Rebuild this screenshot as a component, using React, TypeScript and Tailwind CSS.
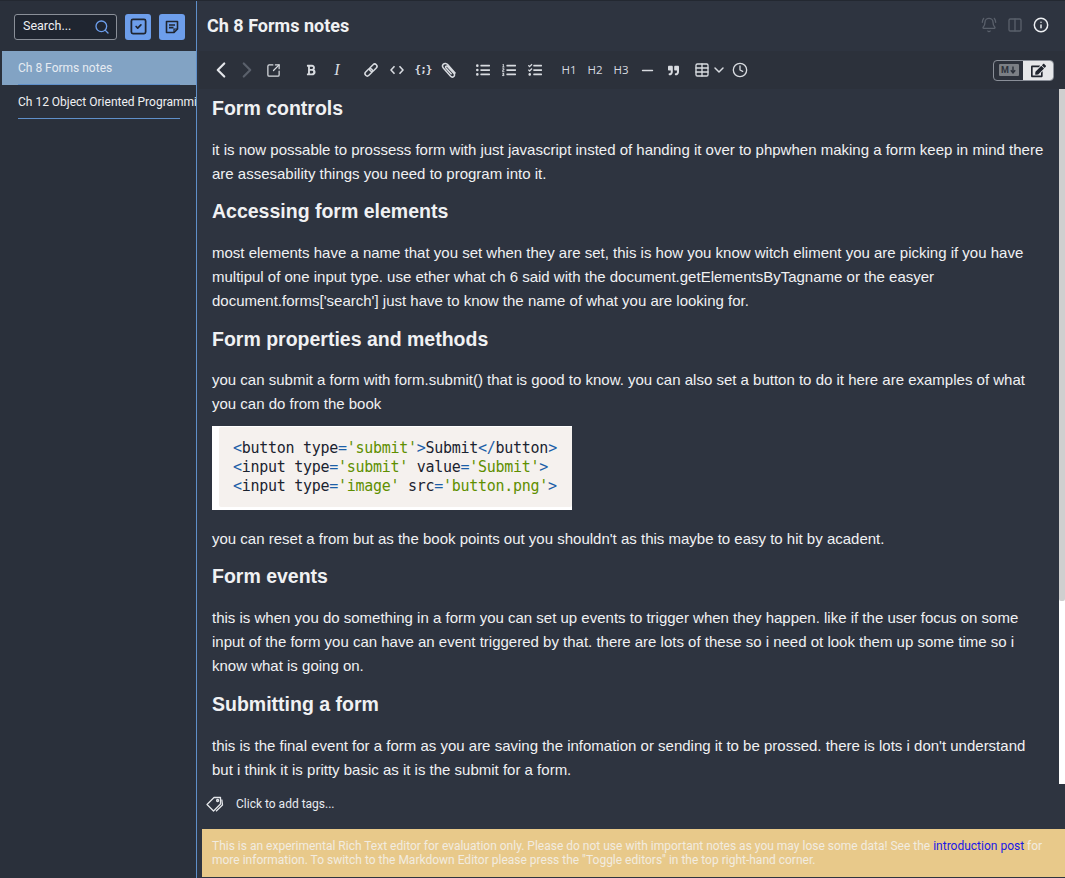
import React from 'react';
import { Search, SquareCheck, ChevronLeft, ChevronRight, SquareArrowOutUpRight, Minus, Table, ChevronDown, Clock, BellRing, Columns2, Info } from 'lucide-react';
import { FaEdit, FaBold, FaListUl, FaListOl, FaQuoteRight, FaTasks } from 'react-icons/fa';

const Heading = ({ children, className = '' }: { children: React.ReactNode; className?: string }) => (
  <h2 className={`text-[19.5px] leading-[24px] font-bold text-[#f0f1f3] ${className}`}>{children}</h2>
);

const Para = ({ children, className = '' }: { children: React.ReactNode; className?: string }) => (
  <p className={`text-[15px] leading-[24px] text-[#f0f1f3] ${className}`}>{children}</p>
);

const Str = ({ children }: { children: React.ReactNode }) => <span className="text-[#5f8f00]">{children}</span>;
const Tok = ({ children }: { children: React.ReactNode }) => <span className="text-[#1d5fa8]">{children}</span>;

const Toolbtn = ({ children, className = '' }: { children: React.ReactNode; className?: string }) => (
  <span className={`flex items-center justify-center shrink-0 text-[#d8dbe0] [&>svg]:shrink-0 ${className}`}>{children}</span>
);

// the toolbar's own glyphs, lucide has no close match for these
const NoteIcon = () => (
  <svg width="16" height="16" viewBox="0 0 16 16" fill="none" stroke="#1f2530" strokeWidth="1.6">
    <path d="M2.5 2.5h11v7.5l-3.5 3.5h-7.5z" strokeLinejoin="round" />
    <path d="M5 6h6M5 8.6h4.5" />
    <path d="M13.5 10h-3.5v3.5" strokeWidth="1.2" />
  </svg>
);

const LinkIcon = () => (
  <svg width="16" height="16" viewBox="0 0 16 16" fill="none" stroke="currentColor" strokeWidth="1.5">
    <g transform="rotate(-45 8 8)">
      <rect x="0.5" y="5.7" width="8.5" height="4.6" rx="2.3" />
      <rect x="7" y="5.7" width="8.5" height="4.6" rx="2.3" />
    </g>
  </svg>
);

const AngleIcon = () => (
  <svg width="14" height="10" viewBox="0 0 14 10" fill="none" stroke="currentColor" strokeWidth="1.6">
    <path d="M4.5 1.2L1 5l3.5 3.8M9.5 1.2L13 5l-3.5 3.8" />
  </svg>
);

const ClipIcon = () => (
  <svg width="18" height="18" viewBox="0 0 18 18" fill="none" stroke="currentColor" strokeWidth="1.5">
    <path d="M15.5 12.5L7.6 3.6C6.4 2.2 4.6 2 3.4 3.1 2.2 4.2 2.3 5.9 3.5 7.3l6.9 7.8c.9 1 2.4 1.3 3.4.4 1-.9.9-2.3 0-3.3L7.6 5.6c-.5-.6-1.2-.7-1.7-.3-.5.4-.4 1.1.1 1.7l5.6 6.3" />
  </svg>
);

const TagsIcon = () => (
  <svg width="18" height="16" viewBox="0 0 18 16" fill="none" stroke="#e4e6ea" strokeWidth="1.3" strokeLinejoin="round">
    <path d="M1 8.5L8 1.5h6.5v6.5l-7 7z" />
    <path d="M15.8 3.5l.7 5.5-6.5 6.3" />
    <circle cx="11.6" cy="4.5" r="1" />
  </svg>
);

const MarkdownBadge = () => (
  <span className="w-[20px] h-[12px] rounded-[1px] bg-[#7b7f85] flex items-center justify-center gap-px text-[#2c313b]">
    <span className="text-[9px] leading-[12px] font-bold">M</span>
    <svg width="6" height="8" viewBox="0 0 6 8" fill="none" stroke="currentColor" strokeWidth="1.4">
      <path d="M3 0.5v6M0.8 4.2L3 6.8l2.2-2.6" />
    </svg>
  </span>
);

const App: React.FC = () => {
  return (
    <div className="w-[1065px] h-[878px] flex overflow-hidden bg-[#2e3440] font-['Roboto',sans-serif] border-t border-[#232831]">
      <aside className="w-[197px] shrink-0 bg-[#2a303b] border-r border-[#5f8fc9] flex flex-col">
        <div className="h-[50px] shrink-0 flex items-center pl-[14px] pt-[1px]">
          <div className="w-[103px] h-[26px] rounded-[3px] border border-[#8a8f98] bg-[#1f2530] flex items-center justify-between pl-2 pr-[6px]">
            <span className="text-[12.5px] text-[#eef0f3]">Search...</span>
            <Search size={16} strokeWidth={2} className="text-[#6d9eeb]" />
          </div>
          <span className="ml-2 w-[26px] h-[26px] rounded-[3px] bg-[#6d9eeb] flex items-center justify-center">
            <SquareCheck size={19} strokeWidth={2.2} className="text-[#1f2530]" />
          </span>
          <span className="ml-2 w-[26px] h-[26px] rounded-[3px] bg-[#6d9eeb] flex items-center justify-center">
            <NoteIcon />
          </span>
        </div>
        <div className="ml-[2px] h-[34px] bg-[#82a3c4] relative flex items-center pl-4">
          <span className="text-[12px] text-[#e6ebf2] whitespace-nowrap">Ch 8 Forms notes</span>
          <span className="absolute left-4 bottom-0 w-[162px] h-px bg-[#5f8fc9]" />
        </div>
        <div className="ml-[2px] h-[34px] relative flex items-center pl-4">
          <span className="w-[178px] overflow-hidden text-[12px] text-[#f0f1f3] whitespace-nowrap">Ch 12 Object Oriented Programming</span>
          <span className="absolute left-4 bottom-0 w-[162px] h-px bg-[#5f8fc9]" />
        </div>
      </aside>

      <main className="flex-1 min-w-0 flex flex-col">
        <header className="h-[50px] shrink-0 flex items-center justify-between pl-[10px] pr-[16px] pb-[2px]">
          <h1 className="text-[18px] font-bold text-[#f0f1f3]">Ch 8 Forms notes</h1>
          <div className="flex items-center gap-[10px]">
            <BellRing size={16} className="text-[#5a606b]" />
            <Columns2 size={16} className="text-[#5a606b]" />
            <Info size={16} strokeWidth={2.2} className="text-[#eef0f3]" />
          </div>
        </header>

        <div className="h-[38px] shrink-0 ml-[2px] bg-[#2c313b] flex items-center pl-[14px] pr-[11px]">
          <Toolbtn className="w-4"><ChevronLeft size={26} strokeWidth={2} className="text-[#e4e6ea]" /></Toolbtn>
          <Toolbtn className="w-4 ml-[10px]"><ChevronRight size={26} strokeWidth={2} className="text-[#5a606b]" /></Toolbtn>
          <Toolbtn className="w-4 ml-[10px]"><SquareArrowOutUpRight size={15} strokeWidth={2} /></Toolbtn>
          <Toolbtn className="w-4 ml-[22px]"><FaBold size={12} /></Toolbtn>
          <Toolbtn className="w-4 ml-[10px] font-['Liberation_Serif',serif] italic text-[16px] leading-none">I</Toolbtn>
          <Toolbtn className="w-4 ml-[18px]"><LinkIcon /></Toolbtn>
          <Toolbtn className="w-4 ml-[10px]"><AngleIcon /></Toolbtn>
          <Toolbtn className="w-4 ml-[10px] text-[11px] font-bold font-['DejaVu_Sans_Mono',monospace] tracking-[-1px]">{'{;}'}</Toolbtn>
          <Toolbtn className="w-4 ml-[10px]"><ClipIcon /></Toolbtn>
          <Toolbtn className="w-4 ml-[18px]"><FaListUl size={14} /></Toolbtn>
          <Toolbtn className="w-4 ml-[10px]"><FaListOl size={14} /></Toolbtn>
          <Toolbtn className="w-4 ml-[10px]"><FaTasks size={14} /></Toolbtn>
          <span className="ml-[18px] w-4 text-[11.5px] text-[#d8dbe0] font-['Open_Sans',sans-serif] text-center">H1</span>
          <span className="ml-[10px] w-4 text-[11.5px] text-[#d8dbe0] font-['Open_Sans',sans-serif] text-center">H2</span>
          <span className="ml-[10px] w-4 text-[11.5px] text-[#d8dbe0] font-['Open_Sans',sans-serif] text-center">H3</span>
          <Toolbtn className="w-4 ml-[10px]"><Minus size={17} strokeWidth={2} /></Toolbtn>
          <Toolbtn className="w-4 ml-[10px]"><FaQuoteRight size={11} /></Toolbtn>
          <Toolbtn className="w-4 ml-[13px]"><Table size={16} strokeWidth={2} /></Toolbtn>
          <Toolbtn className="w-3 ml-[3px]"><ChevronDown size={16} strokeWidth={2.2} /></Toolbtn>
          <Toolbtn className="w-4 ml-[7px]"><Clock size={16} strokeWidth={2} /></Toolbtn>
          <div className="ml-auto flex h-[21px] w-[61px] rounded-[4px] border border-[#8a8f98] overflow-hidden">
            <span className="w-[29px] flex items-center justify-center">
              <MarkdownBadge />
            </span>
            <span className="flex-1 bg-[#e6e7e9] flex items-center justify-center">
              <FaEdit size={15} className="text-[#20252e]" />
            </span>
          </div>
        </div>

        <div className="relative h-[695px] shrink-0 overflow-hidden ml-[1px] pl-[14px] pr-[14px] font-['Liberation_Sans',sans-serif]">
          <Heading className="mt-[7px]">Form controls</Heading>
          <Para className="mt-[18px] w-[835px]">it is now possable to prossess form with just javascript insted of handing it over to phpwhen making a form keep in mind there are assesability things you need to program into it.</Para>
          <Heading className="mt-[13px]">Accessing form elements</Heading>
          <Para className="mt-[18px] w-[835px]">most elements have a name that you set when they are set, this is how you know witch eliment you are picking if you have multipul of one input type. use ether what ch 6 said with the document.getElementsByTagname or the easyer document.forms['search'] just have to know the name of what you are looking for.</Para>
          <Heading className="mt-[14px]">Form properties and methods</Heading>
          <Para className="mt-[17px] w-[835px]">you can submit a form with form.submit() that is good to know. you can also set a button to do it here are examples of what you can do from the book</Para>
          <div className="mt-[10px] w-[360px] h-[84px] bg-white pl-[7px] pt-px">
            <pre className="h-[80px] pl-[14px] pt-[12px] rounded-[2px] bg-[#f5f1ee] text-[15px] leading-[19px] text-[#1b2330] font-['DejaVu_Sans_Mono',monospace] tracking-[-0.28px]">
              <Tok>&lt;</Tok>button type<Tok>=</Tok><Str>'submit'</Str><Tok>&gt;</Tok>Submit<Tok>&lt;/</Tok>button<Tok>&gt;</Tok>{'\n'}
              <Tok>&lt;</Tok>input type<Tok>=</Tok><Str>'submit'</Str> value<Tok>=</Tok><Str>'Submit'</Str><Tok>&gt;</Tok>{'\n'}
              <Tok>&lt;</Tok>input type<Tok>=</Tok><Str>'image'</Str> src<Tok>=</Tok><Str>'button.png'</Str><Tok>&gt;</Tok>
            </pre>
          </div>
          <Para className="mt-[17px] w-[835px]">you can reset a from but as the book points out you shouldn't as this maybe to easy to hit by acadent.</Para>
          <Heading className="mt-[13px]">Form events</Heading>
          <Para className="mt-[18px] w-[835px]">this is when you do something in a form you can set up events to trigger when they happen. like if the user focus on some input of the form you can have an event triggered by that. there are lots of these so i need ot look them up some time so i know what is going on.</Para>
          <Heading className="mt-[14px]">Submitting a form</Heading>
          <Para className="mt-[18px] w-[835px]">this is the final event for a form as you are saving the infomation or sending it to be prossed. there is lots i don't understand but i think it is pritty basic as it is the submit for a form.</Para>
          <span className="absolute right-0 top-0 bottom-0 w-[6px] bg-white">
            <span className="block h-[512px] rounded-b-[2px] bg-[#cfcfcf]" />
          </span>
        </div>

        <div className="h-[40px] shrink-0 flex items-center pl-[9px]">
          <TagsIcon />
          <span className="ml-[12px] text-[12px] text-[#e8ebf0]">Click to add tags...</span>
        </div>

        <div className="mt-[5px] ml-[5px] h-[48px] shrink-0 bg-[#e8c98a] pl-[10px] pr-[16px] pt-[10px] text-[12px] leading-[14px] text-[#f2ece0]">
          <p>This is an experimental Rich Text editor for evaluation only. Please do not use with important notes as you may lose some data! See the <a className="text-[#1a1ae6]">introduction post</a> for more information. To switch to the Markdown Editor please press the "Toggle editors" in the top right-hand corner.</p>
        </div>
      </main>
    </div>
  );
};

export default App;
